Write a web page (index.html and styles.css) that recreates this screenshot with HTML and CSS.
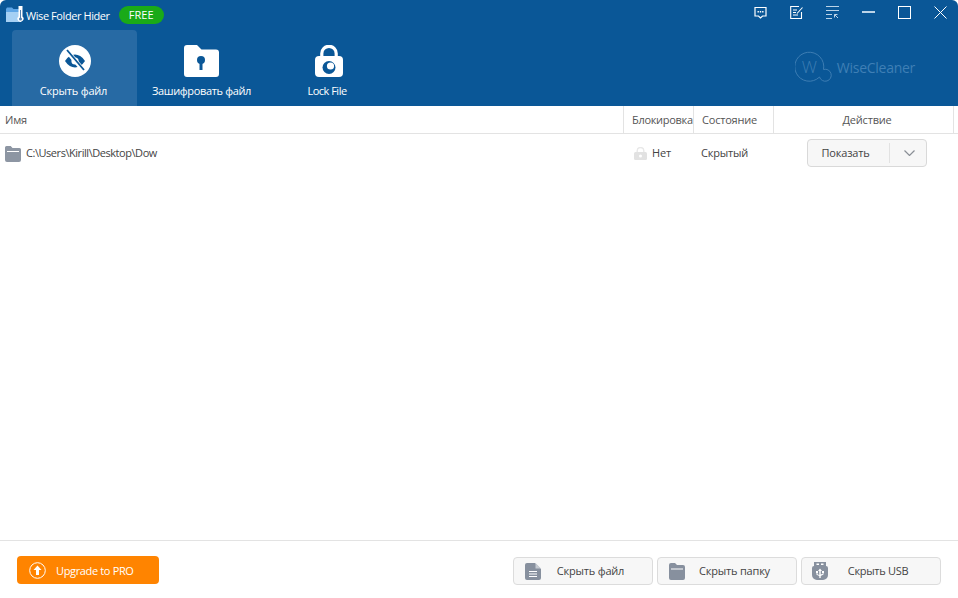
FILE: index.html
```html
<!DOCTYPE html>
<html lang="ru">
<head>
<meta charset="utf-8">
<title>Wise Folder Hider</title>
<link rel="stylesheet" href="styles.css">
</head>
<body>
<div class="window">
  <header class="header">
    <div class="titlebar">
      <div class="brand">
        <svg class="app-icon" viewBox="0 0 20 18" width="20" height="18"><path d="M0 3l1-1.500h5L7.500 3H15v13H0z" fill="#5fa6e6"/><path d="M0 6h15v10H0z" fill="#a5d0f4"/><path d="M12.500 0h4v10.500a3 3 0 1 1-4 0z" fill="#fff"/><circle cx="14.500" cy="13" r="1.500" fill="#4f7fae"/><path d="M14 4h1v8h-1z" fill="#4f7fae"/></svg>
        <span class="app-name">Wise Folder Hider</span>
        <span class="badge">FREE</span>
      </div>
      <div class="win-controls">
        <svg class="ctl" viewBox="0 0 13 13" width="13" height="13"><path d="M1 1.500h11v8.500H8.500l-2 2-2-2H1z" fill="none" stroke="#fff" stroke-width="1.200"/><path d="M3.500 5h1.400v1.400H3.500zM5.800 5h1.400v1.400H5.800zM8.100 5h1.400v1.400H8.100z" fill="#fff"/></svg>
        <svg class="ctl" viewBox="0 0 13 13" width="13" height="13"><path d="M11.500 6v6.500H.7v-12H9" fill="none" stroke="#fff" stroke-width="1.100"/><path d="M3 4h4M3 6.500h3M3 9h5" stroke="#fff" stroke-width="1"/><path d="M7 7.500L12.500 1.500" stroke="#fff" stroke-width="1.100"/></svg>
        <svg class="ctl" viewBox="0 0 13 13" width="13" height="13"><path d="M0 .5h13M0 4.500h13M0 8.500h6M0 12.500h6" stroke="#bcd4e8" stroke-width="1"/><path d="M8.500 8.500h3M8.500 8.500v3M8.500 8.500l3.500 3.500" stroke="#bcd4e8" stroke-width="1" fill="none"/></svg>
        <span class="min-line"></span>
        <span class="max-box"></span>
        <svg class="close" viewBox="0 0 13 13" width="13" height="13"><path d="M.5.5l12 12M12.500.5l-12 12" stroke="#fff" stroke-width="1"/></svg>
      </div>
    </div>
    <div class="toolbar">
      <nav class="tabs">
        <div class="tab tab-active">
          <svg class="tab-icon" viewBox="0 0 32 32" width="32" height="32"><circle cx="16" cy="16" r="16" fill="#fff"/><path d="M6 16c3-4.500 6.500-6.500 10-6.500S23 11.500 26 16c-3 4.500-6.500 6.500-10 6.500S9 20.500 6 16z" fill="#0a5797"/><circle cx="16" cy="16" r="3.600" fill="#fff"/><path d="M7.500 5.500l17 20" stroke="#fff" stroke-width="4.500"/><path d="M8 5l17 20" stroke="#0a5797" stroke-width="1.800"/></svg>
          <span class="tab-label-first">Скрыть файл</span>
        </div>
        <div class="tab tab-tight">
          <svg class="tab-icon" viewBox="0 0 35 32" width="35" height="32"><path d="M0 3a3 3 0 0 1 3-3h10l4.500 4.500H32a3 3 0 0 1 3 3V29a3 3 0 0 1-3 3H3a3 3 0 0 1-3-3z" fill="#fff"/><circle cx="17" cy="15" r="4" fill="#0a5797"/><path d="M15.500 17h3v8h-3z" fill="#0a5797"/></svg>
          <span>Зашифровать файл</span>
        </div>
        <div class="tab tab-tight">
          <svg class="tab-icon" viewBox="0 0 28 32" width="28" height="32"><path d="M6.800 14V8.500a7.200 7.200 0 0 1 14.400 0V14" fill="none" stroke="#fff" stroke-width="3.200"/><rect y="11" width="28" height="21" rx="4" fill="#fff"/><circle cx="14" cy="22.500" r="6.500" fill="#0a5797"/><circle cx="15.500" cy="21" r="3.600" fill="#fff"/></svg>
          <span class="tab-label-last">Lock File</span>
        </div>
      </nav>
      <div class="logo">
        <svg viewBox="0 0 38 32" width="38" height="32"><path d="M28.500 18.500A14.500 14.500 0 1 0 24.500 26A6 6 0 1 0 28.500 18.500" fill="none" stroke="#3d7db3" stroke-width="1"/></svg>
        <span class="logo-w">W</span>
        <span class="logo-text">WiseCleaner</span>
      </div>
    </div>
  </header>
  <section class="table">
    <div class="row head">
      <div class="cell c-name">Имя</div>
      <div class="cell c-lock">Блокировка</div>
      <div class="cell c-state">Состояние</div>
      <div class="cell c-action">Действие</div>
      <div class="cell c-rest"></div>
    </div>
    <div class="row item">
      <div class="c-name path">
        <svg viewBox="0 0 16 17" width="16" height="17"><path d="M0 2.500A1.500 1.500 0 0 1 1.500 1h4.200l1.800 2h7A1.500 1.500 0 0 1 16 4.500v10.500a2 2 0 0 1-2 2H2a2 2 0 0 1-2-2z" fill="#8d96a3"/><path d="M2 6.500h12" stroke="#fff" stroke-width="1"/></svg>
        <span>C:\Users\Kirill\Desktop\Dow</span>
      </div>
      <div class="c-lock lock-val">
        <svg viewBox="0 0 13 13" width="13" height="13"><path d="M3.200 6V3.800a3.300 3.300 0 0 1 6.600 0V6" fill="none" stroke="#e8e8e8" stroke-width="1.400"/><rect y="5" width="13" height="8" rx="1.500" fill="#e2e2e2"/><circle cx="6.500" cy="9" r="1.500" fill="#fff"/></svg>
        <span>Нет</span>
      </div>
      <div class="c-state state-val">Скрытый</div>
      <div class="c-action action-val">
        <div class="split">
          <span class="split-label">Показать</span>
          <span class="split-arrow"><svg viewBox="0 0 11 6" width="11" height="6"><path d="M.5.5l5 5 5-5" fill="none" stroke="#8a8f96" stroke-width="1.200"/></svg></span>
        </div>
      </div>
    </div>
  </section>
  <footer class="footer">
    <button class="upgrade">
      <svg viewBox="0 0 17 17" width="17" height="17"><circle cx="8.500" cy="8.500" r="7.800" fill="none" stroke="#fff" stroke-width="1"/><path d="M8.500 3.500l4 4.500H10v5H7V8H4.500z" fill="#fff"/></svg>
      <span>Upgrade to PRO</span>
    </button>
    <div class="actions">
      <button class="act">
        <svg viewBox="0 0 16 17" width="16" height="17"><path d="M0 2a2 2 0 0 1 2-2h8l6 6v9a2 2 0 0 1-2 2H2a2 2 0 0 1-2-2z" fill="#87909e"/><path d="M4 8.500h8M4 11h8M4 13.500h8" stroke="#fff" stroke-width="1"/><path d="M10.500 0l5.500 5.500h-5.500z" fill="#c5cad1"/></svg>
        <span>Скрыть файл</span>
      </button>
      <button class="act">
        <svg viewBox="0 0 16 17" width="16" height="17"><path d="M0 2a2 2 0 0 1 2-2h4l2 2h6a2 2 0 0 1 2 2v11a2 2 0 0 1-2 2H2a2 2 0 0 1-2-2z" fill="#87909e"/><path d="M2 6h12" stroke="#fff" stroke-width="1"/></svg>
        <span>Скрыть папку</span>
      </button>
      <button class="act act-usb">
        <svg viewBox="0 0 16 18" width="16" height="18"><path d="M2 4V0h12v4a2 2 0 0 1 2 2v7a5 5 0 0 1-5 5H5a5 5 0 0 1-5-5V6a2 2 0 0 1 2-2z" fill="#87909e"/><path d="M4.500 1.500h2.500v1.500H4.500zM9 1.500h2.500v1.500H9z" fill="#fff"/><path d="M8 6.500l2 2.500H8.700v3.500l2-.8V11H10V9h2v2h-.5v1.500L8.700 14v2H7.300v-2l-2.800-1.200V11H4V9h2v2h-.5v1.200l1.800.7V9H6z" fill="#fff"/></svg>
        <span>Скрыть USB</span>
      </button>
    </div>
  </footer>
</div>
</body>
</html>
```
FILE: styles.css
```css
* { box-sizing: border-box; }
html, body { margin: 0; padding: 0; height: 100%; background: #fff; }
body { font-family: "Open Sans", "Noto Sans", sans-serif; font-size: 11px; letter-spacing: -0.2px; color: #444; overflow: hidden; }
.window { width: 958px; height: 598px; display: flex; flex-direction: column; background: #fff; }

.header { height: 106px; background: #0a5797; color: #fff; flex: none; border-radius: 6px 6px 0 0; }
.titlebar { height: 30px; display: flex; justify-content: space-between; align-items: flex-start; }
.brand { display: flex; align-items: center; height: 30px; padding-left: 6px; }
.app-name { font-size: 11px; letter-spacing: -0.42px; }
.badge { margin-left: 9px; width: 45px; height: 18px; border-radius: 9px; background: #1aaa18; font-size: 11px; letter-spacing: 0; line-height: 18px; text-align: center; }
.win-controls { display: flex; align-items: center; gap: 23px; height: 24px; padding-right: 11px; }
.min-line { width: 13px; height: 2px; background: #bcd4e8; }
.max-box { width: 13px; height: 13px; border: 1.500px solid #fff; }
.close { display: block; }

.toolbar { height: 76px; display: flex; justify-content: space-between; padding-left: 12px; }
.tabs { display: flex; gap: 2px; }
.tab { width: 125px; height: 76px; display: flex; flex-direction: column; align-items: center; font-size: 11px; padding-top: 15px; border-radius: 4px 4px 0 0; }
.tab span { margin-top: 6px; white-space: nowrap; }
.tab .tab-label-first { padding-right: 2px; }
.tab .tab-label-last { padding-right: 3px; letter-spacing: -0.5px; }
.tab-tight { letter-spacing: -0.36px; }
.tab-icon { height: 32px; flex: none; }
.tab-active { background: #276aa4; }
.logo { position: relative; display: flex; align-items: center; gap: 4px; padding: 0 43px 0 0; height: 74px; }
.logo-w { position: absolute; left: 7px; top: 25px; font-size: 17px; font-weight: 300; color: #3d7db3; }
.logo-text { font-size: 14px; letter-spacing: -0.27px; color: #3f7fb5; }

.table { flex: 1; }
.row { display: flex; }
.head { height: 28px; border-bottom: 1px solid #e3e3e3; }
.cell { display: flex; align-items: center; height: 27px; border-right: 1px solid #e3e3e3; color: #555; }
.c-name { width: 624px; padding-left: 5px; }
.c-lock { width: 70px; padding-left: 8px; white-space: nowrap; letter-spacing: -0.3px; }
.c-state { width: 80px; padding-left: 8px; }
.c-action { width: 180px; }
.cell.c-action { justify-content: center; padding-left: 7px; }
.c-rest { border-right: 0; flex: 1; }

.item { height: 38px; align-items: center; }
.path { display: flex; align-items: center; gap: 5px; color: #444; letter-spacing: -0.45px; }
.path span, .lock-val span, .state-val { padding-bottom: 1px; }
.lock-val { display: flex; align-items: center; gap: 5px; padding-left: 10px; letter-spacing: -0.2px; }
.state-val { padding-left: 7px; }
.action-val { display: flex; padding-left: 33px; }
.split { width: 120px; height: 28px; display: flex; align-items: center; background: #f7f7f7; border: 1px solid #d9d9d9; border-radius: 4px; }
.split-label { width: 82px; padding-right: 6px; text-align: center; border-right: 1px solid #e2e2e2; line-height: 20px; }
.split-arrow { flex: 1; display: flex; justify-content: center; padding-left: 3px; }

.footer { height: 58px; flex: none; border-top: 1px solid #e3e3e3; display: flex; justify-content: space-between; padding: 15px 17px 0 17px; }
.upgrade { width: 142px; height: 28px; background: #ff8400; border: 0; border-radius: 4px; color: #fff; font: inherit; letter-spacing: -0.35px; display: flex; align-items: center; padding: 0 0 0 12px; gap: 10px; }
.actions { display: flex; gap: 4px; margin-top: 1px; }
.act { width: 140px; height: 28px; display: flex; align-items: center; background: #f7f7f7; border: 1px solid #dcdcdc; border-radius: 4px; font: inherit; letter-spacing: -0.2px; color: #444; padding: 0 0 0 11px; }
.act span { flex: 1; text-align: center; padding: 0 12px 1px 0; }
.act-usb { padding-left: 10px; letter-spacing: -0.3px; }
```
